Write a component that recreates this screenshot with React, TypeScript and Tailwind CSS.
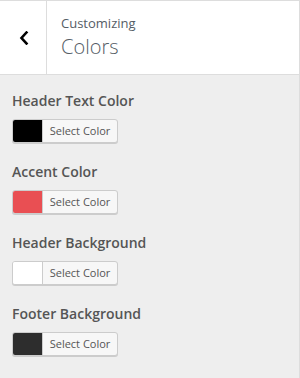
import React from "react";

const items = [
  { label: "Header Text Color", color: "bg-[#000000]" },
  { label: "Accent Color", color: "bg-[#e94f53]" },
  { label: "Header Background", color: "bg-[#ffffff]" },
  { label: "Footer Background", color: "bg-[#2d2d2d]" },
];

export default function App() {
  return (
    <div
      className="w-[300px] h-[378px] bg-[#eeeeee] border-t border-r border-[#dddddd] flex flex-col overflow-hidden"
      style={{ fontFamily: '"Open Sans", sans-serif' }}
    >
      <div className="flex h-[74px] bg-white border-b border-[#dddddd] shrink-0">
        <div className="w-[47px] border-r border-[#dddddd] flex items-center justify-center">
          <svg width="10" height="14" viewBox="0 0 10 14" className="ml-[1px]">
            <path d="M7.5 1.5 L2.5 7 L7.5 12.5" fill="none" stroke="#000" strokeWidth="2.6" strokeLinecap="square" />
          </svg>
        </div>
        <div className="pl-[14px] pt-[12px] flex flex-col">
          <span className="text-[13px] leading-[20px] text-[#555d66]">Customizing</span>
          <span className="text-[20px] leading-[28px] text-[#555d66] font-light">Colors</span>
        </div>
      </div>
      <div className="px-[12px] pt-[14px] flex flex-col">
        {items.map((it) => (
          <div key={it.label} className="flex flex-col h-[71px]">
            <span className="text-[14px] leading-[24px] font-semibold text-[#555555]">{it.label}</span>
            <div className="mt-[6px] flex h-[24px] w-[106px] rounded-[3px] border border-[#cccccc] bg-[#f7f7f7] shadow-[0_1px_0_#cccccc] overflow-hidden">
              <div className={`w-[30px] h-full ${it.color} border-r border-[#cccccc]`} />
              <span className="flex-1 text-center text-[11px] leading-[22px] text-[#555555]">Select Color</span>
            </div>
          </div>
        ))}
      </div>
    </div>
  );
}
